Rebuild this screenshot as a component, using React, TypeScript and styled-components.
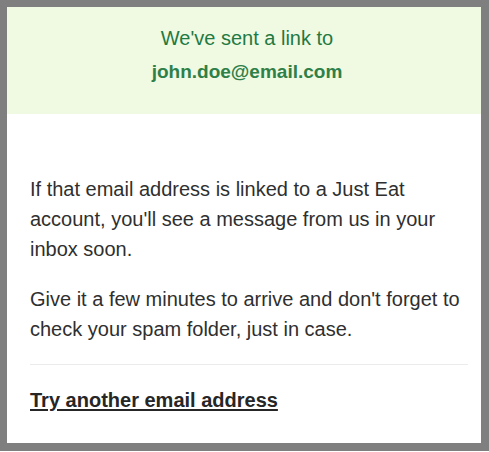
import React from "react";
import styled, { createGlobalStyle } from "styled-components";

const Global = createGlobalStyle`
  html, body { margin: 0; padding: 0; background: #ffffff; }
  body { font-family: "Liberation Sans", Arial, sans-serif; }
`;

const Frame = styled.div`
  box-sizing: border-box;
  width: 489px;
  height: 451px;
  border-style: solid;
  border-color: #7f7f80;
  border-width: 7px 8px 8px 7px;
  background: #ffffff;
  display: flex;
  flex-direction: column;
`;

const Banner = styled.div`
  background: #f0f9e2;
  height: 107px;
  box-sizing: border-box;
  padding: 15px 10px 0 16px;
  text-align: center;
  color: #1f7a43;
  font-size: 20px;
  line-height: 33px;
`;

const Email = styled.div`
  font-weight: bold;
  font-size: 19px;
  color: #2e8048;
`;

const Body = styled.div`
  padding: 60px 13px 0 23px;
  color: #2f2f2f;
  font-size: 20px;
  line-height: 30px;
`;

const Para = styled.p`
  margin: 0 0 20px 0;
`;

const Divider = styled.hr`
  border: none;
  border-top: 1px solid #ebebeb;
  margin: 0 0 20px 0;
`;

const Link = styled.a`
  font-weight: bold;
  color: #262626;
  text-decoration: underline;
  text-decoration-thickness: 2px;
  text-underline-offset: 2px;
  cursor: pointer;
`;

export default function App() {
  return (
    <>
      <Global />
      <Frame>
        <Banner>
          <div>We've sent a link to</div>
          <Email>john.doe@email.com</Email>
        </Banner>
        <Body>
          <Para>
            If that email address is linked to a Just Eat account, you'll see a
            message from us in your inbox soon.
          </Para>
          <Para>
            Give it a few minutes to arrive and don't forget to check your spam
            folder, just in case.
          </Para>
          <Divider />
          <Link>Try another email address</Link>
        </Body>
      </Frame>
    </>
  );
}
